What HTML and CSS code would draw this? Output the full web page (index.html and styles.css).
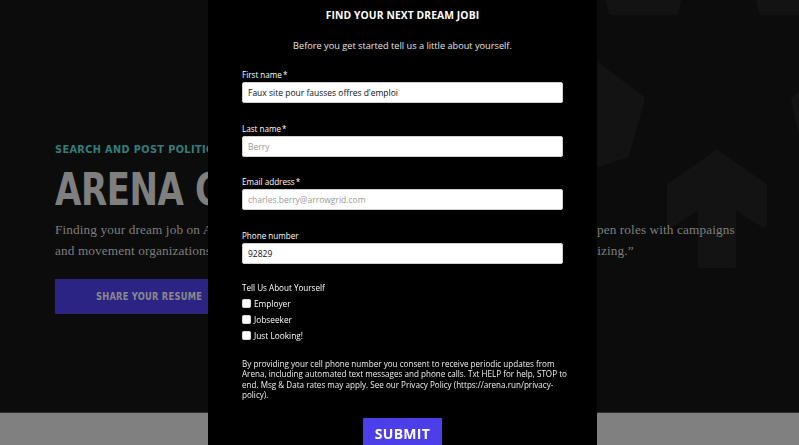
FILE: index.html
```html
<!DOCTYPE html>
<html lang="en">
<head>
<meta charset="utf-8">
<title>Arena Careers</title>
<link rel="stylesheet" href="styles.css">
</head>
<body>
<main class="page">
  <section class="hero">
    <svg class="hero-bg" width="799" height="412" viewBox="0 0 799 412" aria-hidden="true">
      <g fill="#131313" stroke="#131313" stroke-width="6" stroke-linejoin="round">
        <polygon points="602,-20 684,-20 675,12 612,12"/>
        <polygon points="754,-20 830,-20 830,12 762,12"/>
        <polygon points="560,50 598,66 642,99 626,155 598,164 560,170"/>
        <polygon points="812,84 794,100 801,130 812,132"/>
        <polygon points="717,153 764,186 764,225 733,205 733,265 701,265 701,205 670,225 670,186"/>
      </g>
    </svg>
    <div class="hero-content">
      <p class="eyebrow">SEARCH AND POST POLITICAL JOBS</p>
      <h1 class="hero-title"><span class="hero-title-text">ARENA CAREERS</span></h1>
      <p class="lead">Finding your dream job on Arena is easier than ever before. Browse hundreds of great progressive open roles with campaigns<br>and movement organizations all across the country that are building power through grassroots organizing.”</p>
      <a class="hero-btn" href="#"><span class="hero-btn-text">SHARE YOUR RESUME</span></a>
    </div>
  </section>
  <section class="band"></section>
</main>

<div class="overlay">
  <div class="modal">
    <h2 class="modal-title">FIND YOUR NEXT DREAM JOBI</h2>
    <p class="modal-sub">Before you get started tell us a little about yourself.</p>
    <form class="form">
      <div class="field">
        <label class="label" for="fn">First name<span class="req">*</span></label>
        <input class="input" id="fn" type="text" value="Faux site pour fausses offres d'emploi">
      </div>
      <div class="field">
        <label class="label" for="ln">Last name<span class="req">*</span></label>
        <input class="input" id="ln" type="text" placeholder="Berry">
      </div>
      <div class="field">
        <label class="label" for="em">Email address<span class="req">*</span></label>
        <input class="input" id="em" type="email" placeholder="charles.berry@arrowgrid.com">
      </div>
      <div class="field">
        <label class="label" for="ph">Phone number</label>
        <input class="input" id="ph" type="text" value="92829">
      </div>
      <fieldset class="group">
        <legend class="label">Tell Us About Yourself</legend>
        <label class="check"><input type="checkbox" class="box"><span>Employer</span></label>
        <label class="check"><input type="checkbox" class="box"><span>Jobseeker</span></label>
        <label class="check"><input type="checkbox" class="box"><span>Just Looking!</span></label>
      </fieldset>
      <p class="consent">By providing your cell phone number you consent to receive periodic updates from Arena, including automated text messages and phone calls. Txt HELP for help, STOP to end. Msg &amp; Data rates may apply. See our Privacy Policy (https://arena.run/privacy-policy).</p>
      <div class="actions">
        <button class="submit" type="button">SUBMIT</button>
      </div>
    </form>
  </div>
</div>
</body>
</html>
```

FILE: styles.css
```css
* { box-sizing: border-box; }
html, body { margin: 0; padding: 0; }
body {
  width: 799px;
  height: 445px;
  overflow: hidden;
  background: #0c0c0c;
  font-family: "Open Sans", "Noto Sans", sans-serif;
}
.page { display: flex; flex-direction: column; }
.hero {
  position: relative;
  height: 412px;
  background: #0c0c0c;
  overflow: hidden;
}
.hero-bg { position: absolute; left: 0; top: 0; }
.hero-content {
  position: relative;
  padding: 143px 0 0 55px;
  display: flex;
  flex-direction: column;
  align-items: flex-start;
}
.eyebrow {
  margin: 0;
  font-family: "DejaVu Sans Condensed", "DejaVu Sans", sans-serif;
  font-weight: 700;
  font-size: 10.8px;
  line-height: 14px;
  letter-spacing: 0.4px;
  color: #357d7b;
  white-space: nowrap;
}
.hero-title {
  margin: 11px 0 0;
  font-family: "DejaVu Sans Condensed", "DejaVu Sans", sans-serif;
  font-weight: 700;
  font-size: 44px;
  line-height: 44px;
  letter-spacing: -0.5px;
  color: #7f7f7f;
  white-space: nowrap;
}
.hero-title-text {
  display: inline-block;
  transform: scaleX(0.86);
  transform-origin: left center;
}
.lead {
  margin: 7px 0 0;
  font-family: "Liberation Serif", serif;
  font-size: 13.3px;
  line-height: 21px;
  color: #7e7e7e;
  white-space: nowrap;
  letter-spacing: 0.1px;
}
.hero-btn {
  margin-top: 18px;
  display: block;
  width: 190px;
  height: 35px;
  line-height: 35px;
  padding-left: 41px;
  background: #2c2484;
  color: #8a8a8a;
  font-family: "DejaVu Sans Condensed", "DejaVu Sans", sans-serif;
  font-weight: 700;
  font-size: 10.6px;
  letter-spacing: 0.3px;
  text-decoration: none;
  white-space: nowrap;
}
.hero-btn-text {
  display: inline-block;
  transform: scaleX(0.87);
  transform-origin: left center;
}
.band {
  height: 33px;
  background: #808080;
  border-top: 1px solid #2e2e2e;
}

.overlay {
  position: fixed;
  inset: 0;
  display: flex;
}
.modal {
  margin-left: 208px;
  width: 389px;
  height: 100%;
  background: #000;
  padding: 9px 34px 0;
  color: #fff;
}
.modal-title {
  margin: 0;
  text-align: center;
  font-size: 10.3px;
  line-height: 13px;
  font-weight: 700;
  letter-spacing: 0.1px;
}
.modal-sub {
  margin: 17px 0 0;
  text-align: center;
  font-size: 9.2px;
  line-height: 14px;
  color: #e6e6e6;
}
.form { margin-top: 16px; display: flex; flex-direction: column; }
.field { display: flex; flex-direction: column; margin-bottom: 19.5px; }
.label {
  font-size: 8.1px;
  line-height: 11px;
  color: #fff;
  margin-bottom: 2px;
  padding: 0;
}
.req { margin-left: 1px; }
.input {
  width: 321px;
  height: 21px;
  margin: 0;
  padding: 0 5px;
  border: 1px solid #cfcfcf;
  border-radius: 2px;
  background: #fff;
  font-family: inherit;
  font-size: 8.5px;
  color: #111;
  outline: none;
}
.input::placeholder { color: #9a9a9a; }
.group {
  margin: -1px 0 0;
  padding: 0;
  border: 0;
  display: flex;
  flex-direction: column;
}
.group .label { margin-bottom: 2px; }
.check {
  display: flex;
  align-items: center;
  height: 16px;
  font-size: 8.3px;
  color: #fff;
}
.box {
  appearance: none;
  -webkit-appearance: none;
  width: 9px;
  height: 9px;
  margin: 0 3px 0 0;
  background: #fff;
  border: 1px solid #d8d8d8;
  border-radius: 1.5px;
}
.consent {
  margin: 16px -5px 0 0;
  font-size: 8.1px;
  line-height: 10.3px;
  color: #f0f0f0;
}
.actions { display: flex; justify-content: center; margin-top: 18px; }
.submit {
  width: 79px;
  height: 30px;
  border: 0;
  border-radius: 0;
  background: #4c3ee8;
  color: #fff;
  font-family: inherit;
  font-weight: 700;
  font-size: 14px;
  letter-spacing: 0.3px;
  padding: 0;
}
```
